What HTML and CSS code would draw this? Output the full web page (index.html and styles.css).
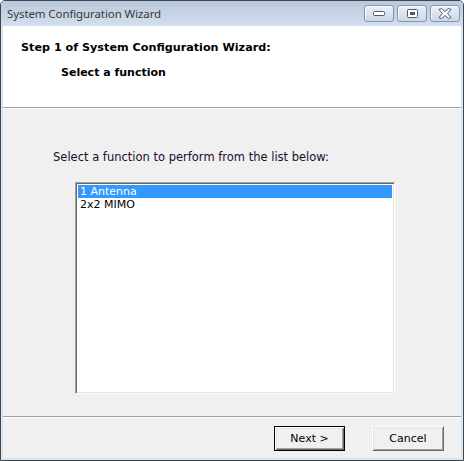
FILE: index.html
```html
<!DOCTYPE html>
<html>
<head>
<meta charset="utf-8">
<link rel="stylesheet" href="styles.css">
</head>
<body>
<div class="window">
  <div class="titlebar">
    <span class="title">System Configuration Wizard</span>
    <div class="controls">
      <div class="ctl">
        <svg width="12" height="6" viewBox="0 0 12 6"><rect x="0.5" y="0.5" width="11" height="4" rx="1" fill="#fff" stroke="#4a5a70"/></svg>
      </div>
      <div class="ctl">
        <svg width="11" height="9" viewBox="0 0 11 9"><rect x="0.5" y="0.5" width="10" height="8" rx="1" fill="#fff" stroke="#4a5a70"/><rect x="3" y="3" width="5" height="3" fill="#4a5a70"/></svg>
      </div>
      <div class="ctl close">
        <svg width="14" height="11" viewBox="0 0 14 11"><path d="M1 1.5 L3.5 0.5 L7 3.5 L10.5 0.5 L13 1.5 L9.5 5.5 L13 9.5 L10.5 10.5 L7 7.5 L3.5 10.5 L1 9.5 L4.5 5.5 Z" fill="#fff" stroke="#4a5a70" stroke-linejoin="round"/></svg>
      </div>
    </div>
  </div>
  <div class="client">
    <div class="header">
      <div class="step">Step 1 of System Configuration Wizard:</div>
      <div class="sub">Select a function</div>
    </div>
    <div class="body">
      <div class="prompt">Select a function to perform from the list below:</div>
      <div class="list">
        <div class="item selected">1 Antenna</div>
        <div class="item">2x2 MIMO</div>
      </div>
    </div>
    <div class="footer">
      <button class="btn default">Next &gt;</button>
      <button class="btn">Cancel</button>
    </div>
  </div>
</div>
</body>
</html>
```
FILE: styles.css
```css
html, body {
  margin: 0;
  padding: 0;
  background: #ffffff;
}
.window {
  width: 464px;
  height: 461px;
  box-sizing: border-box;
  border: 1px solid #3e4650;
  border-radius: 5px 5px 0 0;
  background: #d9e4f1;
  display: flex;
  flex-direction: column;
  overflow: hidden;
}
.titlebar {
  height: 25px;
  flex: none;
  display: flex;
  align-items: flex-start;
  background: linear-gradient(#b9c8da, #d2dfee);
  font-family: "Noto Sans", "Open Sans", sans-serif;
  font-size: 11.5px;
  color: #3a3a3a;
}
.title {
  margin-left: 6px;
  line-height: 26px;
  letter-spacing: -0.1px;
}
.controls {
  margin-left: auto;
  margin-right: 3px;
  margin-top: 4px;
  display: flex;
  gap: 3px;
}
.ctl {
  width: 28px;
  height: 15px;
  border: 1px solid #8494aa;
  border-radius: 3px;
  background: linear-gradient(#e9eff6, #ccd8e6);
  box-shadow: inset 1px 1px rgba(255,255,255,0.8);
  display: flex;
  align-items: center;
  justify-content: center;
}
.client {
  flex: 1;
  margin: 0 2px 2px 2px;
  background: #f0f0f0;
  display: flex;
  flex-direction: column;
  font-family: "DejaVu Sans", sans-serif;
  font-size: 11px;
  color: #000;
}
.header {
  flex: none;
  background: #fff;
  border-bottom: 1px solid #a0a0a0;
  box-sizing: border-box;
  height: 82px;
  padding-top: 15px;
  font-weight: bold;
  font-size: 11.2px;
}
.step {
  margin-left: 18px;
  line-height: 13px;
}
.sub {
  margin-left: 58px;
  margin-top: 12px;
  line-height: 13px;
  font-size: 11px;
}
.body {
  border-top: 1px solid #fff;
  border-bottom: 1px solid #a0a0a0;
  height: 309px;
  flex: none;
  box-sizing: border-box;
  padding-top: 42px;
}
.prompt {
  margin-left: 50px;
  line-height: 13px;
  font-size: 11.5px;
  color: #1a0d2e;
}
.list {
  margin-left: 72px;
  margin-top: 18px;
  width: 320px;
  height: 212px;
  box-sizing: border-box;
  background: #fff;
  border: 1px solid;
  border-color: #a0a0a0 #fff #fff #a0a0a0;
  box-shadow: inset 1px 1px #696969, inset -1px -1px #e3e3e3;
  padding: 2px 2px;
}
.item {
  height: 13px;
  line-height: 13px;
  padding-left: 2px;
  font-size: 11px;
}
.item.selected {
  background: #3399ff;
  color: #fff;
}
.footer {
  flex: 1;
  border-top: 1px solid #fff;
  display: flex;
  justify-content: flex-end;
  align-items: flex-start;
  padding-top: 8px;
  padding-right: 17px;
  gap: 27px;
}
.btn {
  width: 72px;
  height: 25px;
  box-sizing: border-box;
  font-family: "DejaVu Sans", sans-serif;
  font-size: 11px;
  color: #000;
  background: #f0f0f0;
  border: 1px solid;
  border-color: #fff #696969 #696969 #fff;
  box-shadow: inset 1px 1px #e3e3e3, inset -1px -1px #a0a0a0;
  padding: 0;
  margin: 0;
}
.btn.default {
  border: 1px solid #000;
  box-shadow: inset 1px 1px #fff, inset -1px -1px #696969, inset 2px 2px #e3e3e3, inset -2px -2px #a0a0a0;
  width: 71px;
}
```
